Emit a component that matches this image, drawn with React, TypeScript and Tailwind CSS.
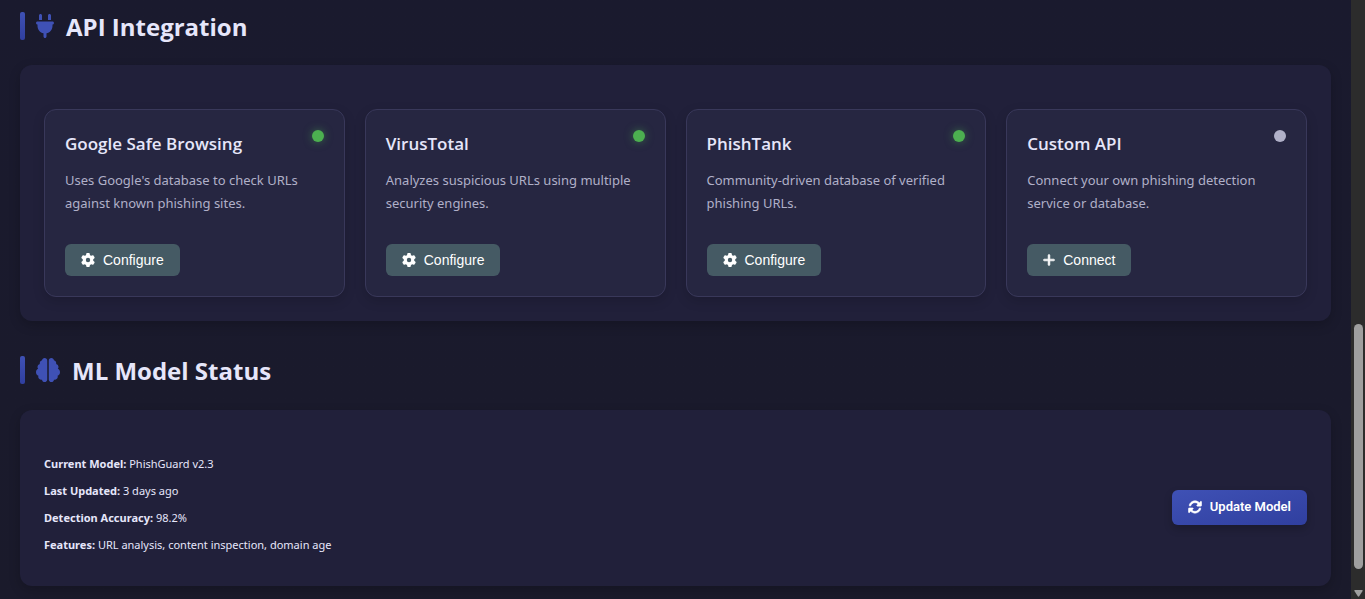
import type { ReactNode } from "react";
import { FaBrain, FaGear, FaPlug, FaPlus, FaRotate } from "react-icons/fa6";

type Service = { name: string; text: string; connected: boolean };

const services: Service[] = [
  { name: "Google Safe Browsing", text: "Uses Google's database to check URLs against known phishing sites.", connected: true },
  { name: "VirusTotal", text: "Analyzes suspicious URLs using multiple security engines.", connected: true },
  { name: "PhishTank", text: "Community-driven database of verified phishing URLs.", connected: true },
  { name: "Custom API", text: "Connect your own phishing detection service or database.", connected: false },
];

const modelFacts = [
  ["Current Model:", "PhishGuard v2.3"],
  ["Last Updated:", "3 days ago"],
  ["Detection Accuracy:", "98.2%"],
  ["Features:", "URL analysis, content inspection, domain age"],
];

function SectionTitle({ icon, children }: { icon: ReactNode; children: ReactNode }) {
  return (
    <h2 className="flex h-8 items-center text-2xl font-bold text-[#e6e6fa]">
      <span className="mr-[11px] h-7 w-[5px] rounded-xs bg-linear-to-b from-[#3f51b5] to-[#303f9f]" />
      <span className="mr-3 text-[#3f51b5]">{icon}</span>
      <span className="pt-0.5">{children}</span>
    </h2>
  );
}

function ServiceCard({ name, text, connected }: Service) {
  return (
    <article className="flex flex-col items-start rounded-xl border border-[#39385a] bg-[#262641] p-5 shadow-[0_4px_12px_rgba(0,0,0,0.15)]">
      <div className="flex w-full items-start justify-between">
        <h3 className="text-[17px] leading-7 font-semibold text-[#e6e6fa]">{name}</h3>
        <span
          className={
            connected
              ? "size-3 rounded-full bg-[#4caf50] shadow-[0_0_8px_rgba(76,175,80,0.5)]"
              : "size-3 rounded-full bg-[#b0b0c8]"
          }
        />
      </div>
      <p className="mt-[11px] mb-[29px] font-['Noto_Sans','Open_Sans',sans-serif] text-[13px] leading-[23px] text-[#b0b0c8]">
        {text}
      </p>
      <button
        type="button"
        className="mt-auto flex h-8 items-center gap-2 rounded-md bg-[#455a64] px-4 font-['Liberation_Sans',Arial,sans-serif] text-sm text-white"
      >
        {connected ? (
          <FaGear className="size-3.5" />
        ) : (
          <FaPlus className="h-3.5 w-3 overflow-visible stroke-current stroke-[24]" />
        )}
        {connected ? "Configure" : "Connect"}
      </button>
    </article>
  );
}

export default function App() {
  return (
    <div className="flex min-h-screen bg-[#1a1a2e] font-['Open_Sans','Noto_Sans',sans-serif] text-[#e6e6fa]">
      <main className="min-w-0 flex-1 bg-linear-to-b from-[#1a1a2e] to-[#1a1a2b] px-5 pt-2.5">
        <section>
          <SectionTitle icon={<FaPlug className="h-6 w-[18px]" />}>API Integration</SectionTitle>
          <div className="mt-[23px] rounded-xl bg-[#21203a] px-6 pt-11 pb-6 shadow-[0_4px_12px_rgba(0,0,0,0.2)]">
            <div className="grid grid-cols-4 gap-5">
              {services.map((service) => (
                <ServiceCard key={service.name} {...service} />
              ))}
            </div>
          </div>
        </section>
        <section className="mt-[33px]">
          <SectionTitle icon={<FaBrain className="size-6" />}>ML Model Status</SectionTitle>
          <div className="mt-6 flex items-center justify-between rounded-xl bg-[#21203a] px-6 pt-10 pb-7 shadow-[0_4px_12px_rgba(0,0,0,0.2)]">
            <div className="font-['Noto_Sans','Open_Sans',sans-serif] text-[11px] leading-[27px]">
              {modelFacts.map(([label, value]) => (
                <p key={label}>
                  <strong>{label}</strong> {value}
                </p>
              ))}
            </div>
            <button
              type="button"
              className="mt-1.5 flex h-[35px] items-center gap-2 rounded-md bg-linear-to-br from-[#3f51b5] to-[#303f9f] px-4 font-['Roboto',sans-serif] text-[13px] font-semibold text-white shadow-[0_4px_8px_rgba(0,0,0,0.2)]"
            >
              <FaRotate className="size-3.5 stroke-current stroke-[20]" />
              Update Model
            </button>
          </div>
        </section>
      </main>
      <div aria-hidden="true" className="flex w-3.5 shrink-0 flex-col items-center bg-[#2c2c2c] pb-0.5">
        <div className="flex-[324]" />
        <div className="w-[9px] flex-[245] rounded-full bg-[#9f9f9f]" />
        <div className="flex-[21]" />
        <svg viewBox="0 0 9 7" className="h-[7px] w-[9px] fill-[#9f9f9f]">
          <path d="M1 0h7q1 0 .6 1L5.2 6.3q-.7.9-1.4 0L.4 1Q0 0 1 0Z" />
        </svg>
      </div>
    </div>
  );
}
